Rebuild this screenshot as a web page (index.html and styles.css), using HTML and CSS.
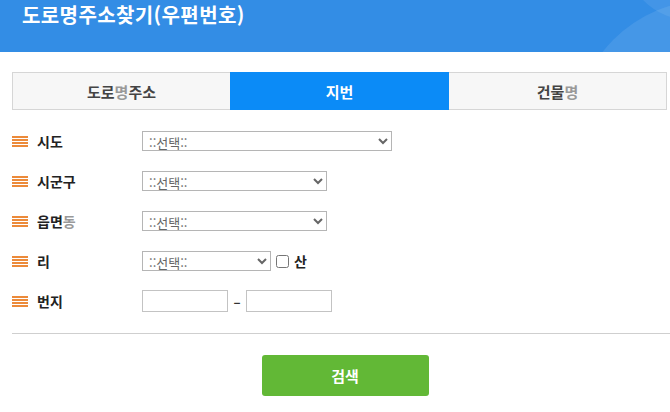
FILE: index.html
```html
<!DOCTYPE html>
<html lang="ko">
<head>
<meta charset="UTF-8" />
<meta name="viewport" content="width=device-width, initial-scale=1.0" />
<title>도로명주소찾기(우편번호)</title>
<link rel="stylesheet" href="styles.css">
</head>
<body>

<!-- 상단 헤더 -->
<div class="header">
  <h1>도로명주소찾기(우편번호)</h1>
  <span class="deco deco-big"></span>
  <span class="deco deco-top"></span>
</div>

<div class="wrap">
  <!-- 탭 -->
  <div class="tabs">
    <div class="tab">도로<span class="dim">명</span>주소</div>
    <div class="tab active">지번</div>
    <div class="tab">건물<span class="dim">명</span></div>
  </div>

  <!-- 검색 폼 -->
  <form class="search-form">
    <div class="row">
      <label class="lbl"><i class="ico"></i>시도</label>
      <select class="sel sel-lg"><option>::선택::</option></select>
    </div>
    <div class="row">
      <label class="lbl"><i class="ico"></i>시군구</label>
      <select class="sel sel-md"><option>::선택::</option></select>
    </div>
    <div class="row">
      <label class="lbl"><i class="ico"></i>읍면<span class="dim">동</span></label>
      <select class="sel sel-md"><option>::선택::</option></select>
    </div>
    <div class="row">
      <label class="lbl"><i class="ico"></i>리</label>
      <select class="sel sel-sm"><option>::선택::</option></select>
      <label class="san"><input type="checkbox" /> 산</label>
    </div>
    <div class="row">
      <label class="lbl"><i class="ico"></i>번지</label>
      <input type="text" class="num" />
      <span class="dash">–</span>
      <input type="text" class="num" />
    </div>

    <div class="line"></div>

    <div class="btn-area">
      <button type="button" class="btn-search">검색</button>
    </div>
  </form>
</div>

</body>
</html>
```

FILE: styles.css
```css
/* 기본 */
body {
  margin: 0;
  font-family: "Noto Sans CJK KR", "Noto Sans", sans-serif;
  color: #222;
  background: #fff;
}

/* 헤더 */
.header {
  position: relative;
  height: 52px;
  background-color: #338de5;
  overflow: hidden;
}

.header h1 {
  margin: 0;
  padding: 1px 0 0 22px;
  font-size: 20px;
  font-weight: bold;
  line-height: 28px;
  color: #fff;
  letter-spacing: 0.4px;
}

.deco {
  position: absolute;
  border-radius: 50%;
  background: rgba(255,255,255,0.09);
}

.deco-big {
  left: 574px;
  top: 0;
  width: 270px;
  height: 270px;
}

.deco-top {
  left: 625px;
  top: -110px;
  width: 130px;
  height: 130px;
  background: rgba(255,255,255,0.08);
}

.wrap {
  padding-left: 12px;
}

/* 탭 */
.tabs {
  display: flex;
  margin: 20px 3px 0 0;
  height: 38px;
}

.tab {
  flex: 1;
  display: flex;
  align-items: center;
  justify-content: center;
  background: #f7f7f7;
  border: 1px solid #d6d6d6;
  font-size: 15px;
  font-weight: bold;
  color: #444;
}

.tab:first-child {
  border-right: none;
}

.tab:last-child {
  border-left: none;
}

.tab.active {
  background: #0b8bf7;
  border-color: #0b8bf7;
  color: #fff;
}

.dim {
  color: #999;
}

/* 폼 */
.search-form {
  margin: 11px 0 0 0;
}

.row {
  display: flex;
  align-items: center;
  height: 40px;
}

.lbl {
  display: flex;
  align-items: center;
  width: 130px;
  font-size: 14px;
  font-weight: bold;
  color: #222;
}

.ico {
  display: inline-block;
  width: 16px;
  height: 11px;
  margin-right: 9px;
  background: repeating-linear-gradient(to bottom, #ec8a3a 0, #ec8a3a 2px, transparent 2px, transparent 3px);
}

.sel {
  height: 20px;
  padding: 0 2px;
  border: 1px solid #b5b5b5;
  background: #fff;
  font-family: "Noto Sans CJK KR", sans-serif;
  font-size: 13px;
  color: #666;
}

.sel-lg { width: 250px; }
.sel-md { width: 185px; }
.sel-sm { width: 129px; }

.san {
  display: flex;
  align-items: center;
  margin-left: 5px;
  font-size: 14px;
  font-weight: bold;
}

.san input {
  width: 13px;
  height: 13px;
  margin: 0 5px 0 0;
}

.num {
  width: 86px;
  height: 22px;
  padding: 0 3px;
  border: 1px solid #c3c3c3;
  box-sizing: border-box;
}

.dash {
  width: 18px;
  text-align: center;
  font-size: 13px;
  font-weight: bold;
  color: #333;
}

.line {
  margin-top: 12px;
  border-top: 1px solid #cfcfcf;
}

.btn-area {
  display: flex;
  justify-content: center;
  padding: 21px 0 0 0;
  margin-left: 8px;
}

.btn-search {
  width: 167px;
  height: 41px;
  border: none;
  border-radius: 3px;
  background: #62b836;
  color: #fff;
  font-family: "Noto Sans CJK KR", sans-serif;
  font-size: 15px;
  font-weight: bold;
  cursor: pointer;
}
```
